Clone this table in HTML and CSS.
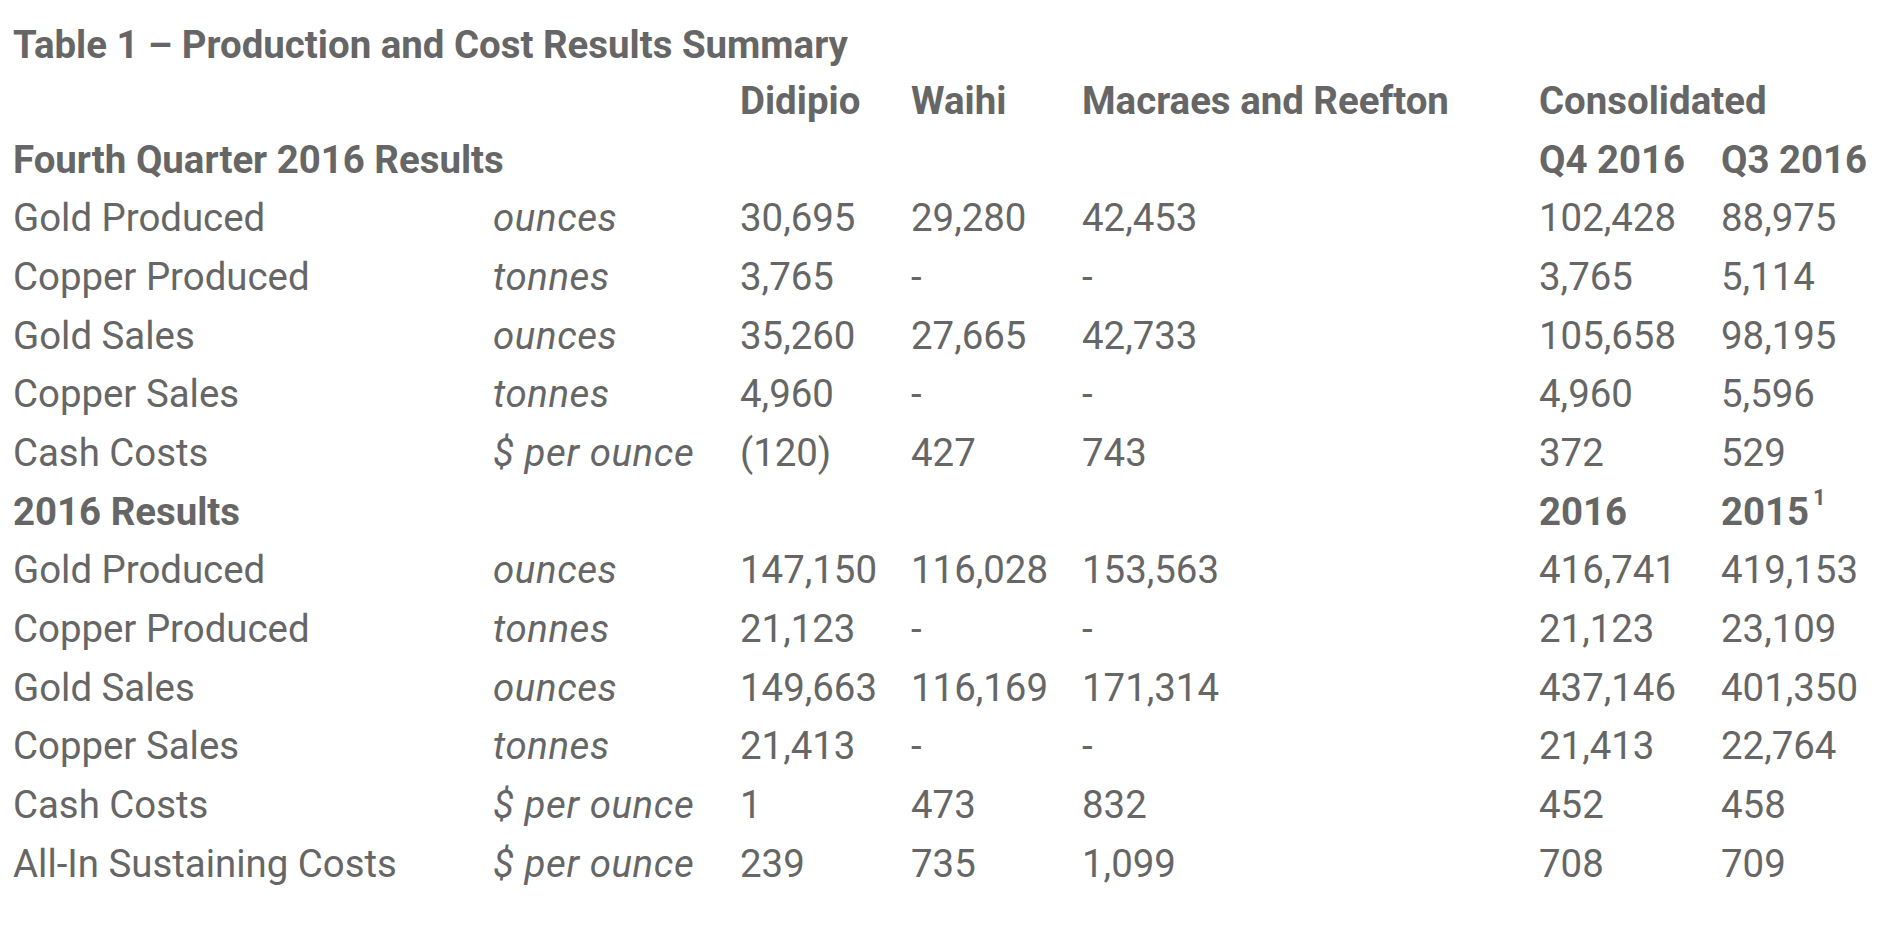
FILE: index.html
```html
<!DOCTYPE html>
<html lang="en">
<head>
<meta charset="utf-8">
<title>Table 1 – Production and Cost Results Summary</title>
<link rel="stylesheet" href="styles.css">
</head>
<body>
<div class="page">
  <div class="title">Table 1 – Production and Cost Results Summary</div>
  <table class="results">
    <colgroup>
      <col class="c-label">
      <col class="c-unit">
      <col class="c-site">
      <col class="c-site">
      <col class="c-wide">
      <col class="c-cons">
      <col class="c-cons2">
    </colgroup>
    <tbody>
      <tr>
        <td></td><td></td>
        <th>Didipio</th>
        <th>Waihi</th>
        <th>Macraes and Reefton</th>
        <th colspan="2">Consolidated</th>
      </tr>
      <tr class="section first">
        <th colspan="2">Fourth Quarter 2016 Results</th>
        <td></td><td></td><td></td>
        <th>Q4 2016</th>
        <th>Q3 2016</th>
      </tr>
      <tr><td>Gold Produced</td><td class="unit">ounces</td><td>30,695</td><td>29,280</td><td>42,453</td><td>102,428</td><td>88,975</td></tr>
      <tr><td>Copper Produced</td><td class="unit">tonnes</td><td>3,765</td><td>-</td><td>-</td><td>3,765</td><td>5,114</td></tr>
      <tr><td>Gold Sales</td><td class="unit">ounces</td><td>35,260</td><td>27,665</td><td>42,733</td><td>105,658</td><td>98,195</td></tr>
      <tr><td>Copper Sales</td><td class="unit">tonnes</td><td>4,960</td><td>-</td><td>-</td><td>4,960</td><td>5,596</td></tr>
      <tr><td>Cash Costs</td><td class="unit">$ per ounce</td><td>(120)</td><td>427</td><td>743</td><td>372</td><td>529</td></tr>
      <tr class="section">
        <th colspan="2">2016 Results</th>
        <td></td><td></td><td></td>
        <th>2016</th>
        <th>2015<span class="sup">1</span></th>
      </tr>
      <tr><td>Gold Produced</td><td class="unit">ounces</td><td>147,150</td><td>116,028</td><td>153,563</td><td>416,741</td><td>419,153</td></tr>
      <tr><td>Copper Produced</td><td class="unit">tonnes</td><td>21,123</td><td>-</td><td>-</td><td>21,123</td><td>23,109</td></tr>
      <tr><td>Gold Sales</td><td class="unit">ounces</td><td>149,663</td><td>116,169</td><td>171,314</td><td>437,146</td><td>401,350</td></tr>
      <tr><td>Copper Sales</td><td class="unit">tonnes</td><td>21,413</td><td>-</td><td>-</td><td>21,413</td><td>22,764</td></tr>
      <tr><td>Cash Costs</td><td class="unit">$ per ounce</td><td>1</td><td>473</td><td>832</td><td>452</td><td>458</td></tr>
      <tr><td>All-In Sustaining Costs</td><td class="unit">$ per ounce</td><td>239</td><td>735</td><td>1,099</td><td>708</td><td>709</td></tr>
    </tbody>
  </table>
</div>
</body>
</html>
```
FILE: styles.css
```css
html, body {
  margin: 0;
  padding: 0;
  background: #ffffff;
}

body {
  font-family: Roboto, "Liberation Sans", Arial, sans-serif;
  font-size: 38.4px;
  color: #666666;
}

.page {
  padding: 18px 0 0 13px;
}

.title {
  font-weight: 700;
  line-height: 54px;
  white-space: nowrap;
}

.results {
  border-collapse: collapse;
  border-spacing: 0;
  table-layout: fixed;
  width: 1880px;
}

.c-label { width: 480px; }
.c-unit { width: 247px; }
.c-site { width: 171px; }
.c-wide { width: 457px; }
.c-cons { width: 182px; }
.c-cons2 { width: 172px; }

.results td,
.results th {
  padding: 0;
  height: 58.65px;
  line-height: 58.65px;
  text-align: left;
  vertical-align: baseline;
  white-space: nowrap;
  font-weight: 400;
}

.results th {
  font-weight: 700;
}

.results .unit {
  font-style: italic;
  letter-spacing: 0.6px;
}

.sup {
  font-size: 22px;
  line-height: 1;
  vertical-align: 20px;
  margin-left: 4px;
}
```
